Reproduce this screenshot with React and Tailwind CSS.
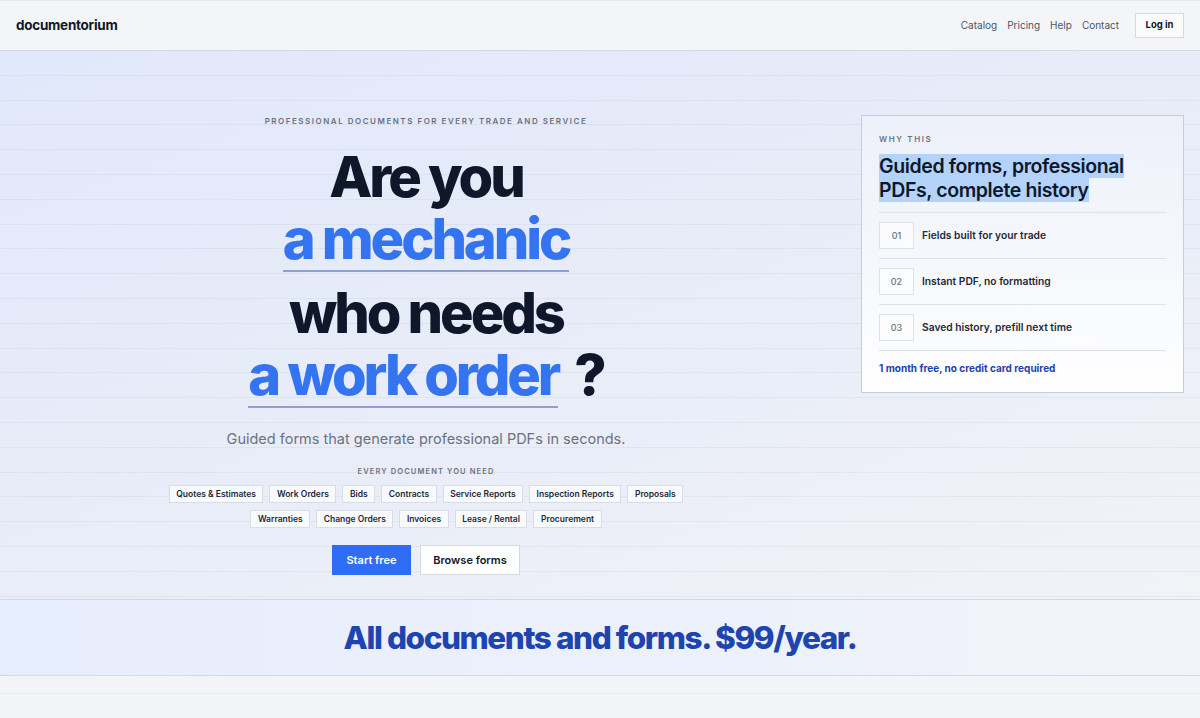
import React from 'react';

const docsRowOne = ['Quotes & Estimates', 'Work Orders', 'Bids', 'Contracts', 'Service Reports', 'Inspection Reports', 'Proposals'];
const docsRowTwo = ['Warranties', 'Change Orders', 'Invoices', 'Lease / Rental', 'Procurement'];

const reasons = [
  { num: '01', text: 'Fields built for your trade' },
  { num: '02', text: 'Instant PDF, no formatting' },
  { num: '03', text: 'Saved history, prefill next time' },
];

const Chip = ({ label }) => (
  <span className="h-[18px] px-[6.5px] flex items-center bg-white/70 border border-[#d8dce4] text-[8.5px] font-semibold text-[#1f2937]">
    {label}
  </span>
);

const App = () => {
  return (
    <div className="min-h-screen font-['Inter',sans-serif] bg-[#f3f4f7] [background-image:repeating-linear-gradient(to_bottom,transparent_0px,transparent_23.8px,rgba(100,116,139,0.08)_23.8px,rgba(100,116,139,0.08)_24.8px)]">
      {/* Header */}
      <header className="h-[51px] flex items-center justify-between px-4 bg-[#f4f5f8] border-t border-t-[#e6e8ee] border-b border-b-[#d3d9e4]">
        <div className="text-[13.5px] font-bold tracking-[-0.02em] text-[#111827]">documentorium</div>
        <nav className="flex items-center">
          <div className="flex items-center gap-[10px] text-[10px] text-[#4b5563]">
            <a>Catalog</a>
            <a>Pricing</a>
            <a>Help</a>
            <a>Contact</a>
          </div>
          <button className="ml-4 h-[25px] px-[9.5px] bg-white/60 border border-[#d6dae2] text-[9.5px] font-bold text-[#111827]">
            Log in
          </button>
        </nav>
      </header>

      {/* Hero */}
      <section className="px-4 pt-[64px] pb-[24px] flex items-start gap-[25px] [background-image:repeating-linear-gradient(to_bottom,transparent_0px,transparent_23.8px,rgba(100,116,139,0.08)_23.8px,rgba(100,116,139,0.08)_24.8px),linear-gradient(160deg,#e1e8fb_0%,#e9edf8_55%,#f1f3f7_100%)]">
        <div className="flex-1 flex flex-col items-center text-center">
          <p className="text-[8px] leading-[12px] font-semibold tracking-[0.19em] text-[#6b7280] uppercase">
            Professional documents for every trade and service
          </p>

          <h1 className="mt-[19px] flex flex-col items-center text-[56px] font-extrabold tracking-[-0.055em]">
            <span className="leading-[62px] text-[#0f172a]">Are you</span>
            <span className="leading-[62px] text-[#3574f0] border-b-2 border-[#8ea2cc]">a mechanic</span>
            <span className="mt-[10px] leading-[62px] text-[#0f172a]">who needs</span>
            <span className="leading-[62px] flex items-start">
              <span className="text-[#3574f0] border-b-2 border-[#8ea2cc]">a work order</span>
              <span className="ml-[16px] text-[#0f172a]">?</span>
            </span>
          </h1>

          <p className="mt-[19px] text-[14.5px] leading-[24px] text-[#6b7280]">
            Guided forms that generate professional PDFs in seconds.
          </p>

          <p className="mt-[15px] text-[7.5px] leading-[12px] font-semibold tracking-[0.15em] text-[#6b7280] uppercase">
            Every document you need
          </p>

          <div className="mt-[7px] flex flex-col items-center gap-[7px]">
            <div className="flex gap-[6px]">
              {docsRowOne.map((d) => <Chip key={d} label={d} />)}
            </div>
            <div className="flex gap-[6px]">
              {docsRowTwo.map((d) => <Chip key={d} label={d} />)}
            </div>
          </div>

          <div className="mt-[17px] flex gap-[9px]">
            <button className="h-[30px] w-[79px] bg-[#2f6df6] text-white text-[11px] font-semibold">Start free</button>
            <button className="h-[30px] w-[100px] bg-white border border-[#d6dae2] text-[#111827] text-[11px] font-semibold">
              Browse forms
            </button>
          </div>
        </div>

        {/* Why this card */}
        <aside className="w-[323px] shrink-0 border border-[#c8cdd7] px-[17px] pt-[17px] pb-[17px] bg-[linear-gradient(to_bottom,rgba(238,241,250,0.85),rgba(255,255,255,0.97))]">
          <p className="text-[8px] leading-[12px] font-semibold tracking-[0.2em] text-[#6b7280] uppercase">Why this</p>
          <h2 className="mt-[10px] text-[19.5px] leading-[23.5px] font-semibold tracking-[-0.02em] text-[#0f172a]">
            <span className="bg-[#b3d3fb] [box-decoration-break:clone]">
              Guided forms, professional
              <br />
              PDFs, complete history
            </span>
          </h2>
          <div className="mt-[10px] border-t border-[#dde1e8]">
            {reasons.map((r) => (
              <div key={r.num} className="py-[9px] flex items-center gap-[8px] border-b border-[#dde1e8]">
                <span className="w-[35px] h-[27px] flex items-center justify-center border border-[#dde1e8] bg-white/60 text-[9px] font-medium text-[#6b7280]">
                  {r.num}
                </span>
                <span className="text-[10.25px] font-semibold text-[#1f2937]">{r.text}</span>
              </div>
            ))}
          </div>
          <p className="mt-[10px] text-[10px] leading-[14px] font-bold text-[#1e40af]">1 month free, no credit card required</p>
        </aside>
      </section>

      {/* Price band */}
      <section className="h-[77px] flex items-center justify-center border-t border-b border-[#d3d8e2] bg-[linear-gradient(to_right,#e6edfc,#edf1fb_60%,#f2f4f9)]">
        <p className="text-[31.5px] font-extrabold tracking-[-0.045em] text-[#1e44b0]">All documents and forms. $99/year.</p>
      </section>
    </div>
  );
};

export default App;
